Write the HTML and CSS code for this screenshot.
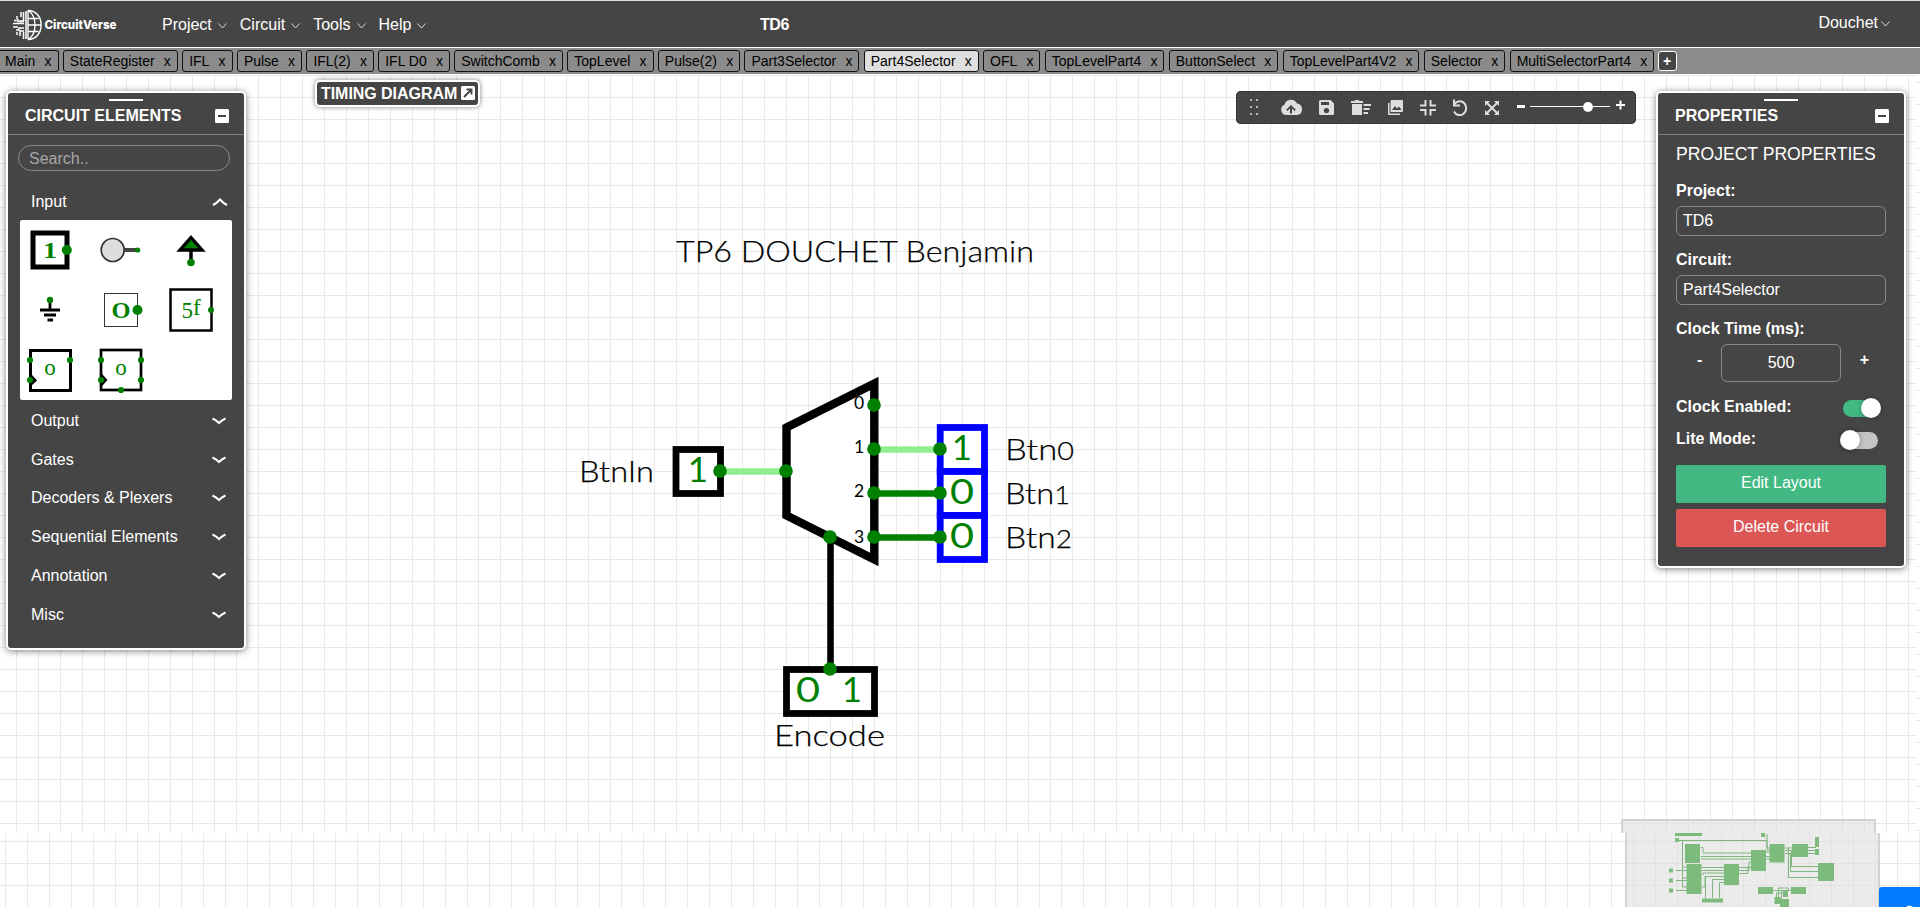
FILE: index.html
```html
<!DOCTYPE html>
<html lang="en">
<head>
<meta charset="utf-8">
<title>CircuitVerse - TD6</title>
<link rel="stylesheet" href="styles.css">
</head>
<body>
<header class="navbar">
  <svg class="logo" width="110" height="34" viewBox="10 6 110 34">
    <g fill="none" stroke="#fff" stroke-width="1.4">
      <path d="M28 9.500V38.500M28 9.500C45.500 9.500 45.500 38.500 28 38.500M29 10C37 16 37 32 29 38M28 17.500H38.500M28 24H41M28 30.500H38.500"/>
      <path d="M26 10V38M23.500 11V20H19.500M21 11V16M24 22.500H13M24 20.500H18V18M24 27H19V29H16M24 30H20V35M23.500 31V38M14 19.500H17M13 26H18M17 15V18M17 31V34" stroke-width="1.500"/>
    </g>
    <text x="44.500" y="28.200" class="logo-text" textLength="72" lengthAdjust="spacingAndGlyphs">CircuitVerse</text>
  </svg>
  <nav class="menu">
    <span class="menu-item">Project<svg class="caret" width="9" height="6" viewBox="0 0 9 6"><path d="M.5.5L4.500 5L8.500.5"/></svg></span>
    <span class="menu-item">Circuit<svg class="caret" width="9" height="6" viewBox="0 0 9 6"><path d="M.5.5L4.500 5L8.500.5"/></svg></span>
    <span class="menu-item">Tools<svg class="caret" width="9" height="6" viewBox="0 0 9 6"><path d="M.5.5L4.500 5L8.500.5"/></svg></span>
    <span class="menu-item">Help<svg class="caret" width="9" height="6" viewBox="0 0 9 6"><path d="M.5.5L4.500 5L8.500.5"/></svg></span>
  </nav>
  <span class="project-name">TD6</span>
  <span class="menu-item user">Douchet<svg class="caret" width="9" height="6" viewBox="0 0 9 6"><path d="M.5.5L4.500 5L8.500.5"/></svg></span>
</header>
<div class="tabs">
  <div class="tab first">Main<span>x</span></div>
  <div class="tab">StateRegister<span>x</span></div>
  <div class="tab">IFL<span>x</span></div>
  <div class="tab">Pulse<span>x</span></div>
  <div class="tab">IFL(2)<span>x</span></div>
  <div class="tab">IFL D0<span>x</span></div>
  <div class="tab">SwitchComb<span>x</span></div>
  <div class="tab">TopLevel<span>x</span></div>
  <div class="tab">Pulse(2)<span>x</span></div>
  <div class="tab">Part3Selector<span>x</span></div>
  <div class="tab active">Part4Selector<span>x</span></div>
  <div class="tab">OFL<span>x</span></div>
  <div class="tab">TopLevelPart4<span>x</span></div>
  <div class="tab">ButtonSelect<span>x</span></div>
  <div class="tab">TopLevelPart4V2<span>x</span></div>
  <div class="tab">Selector<span>x</span></div>
  <div class="tab">MultiSelectorPart4<span>x</span></div>
  <div class="tab-add">+</div>
</div>
<main class="workspace">
  <svg class="canvas" width="1920" height="832" viewBox="0 75 1920 832">
    <defs>
      <pattern id="grid" x="16" y="9" width="22" height="22" patternUnits="userSpaceOnUse"><path d="M0 .5H22M.5 0V22"/></pattern>
      <pattern id="grid-low" x="5" y="5" width="22" height="22" patternUnits="userSpaceOnUse"><path d="M0 .5H22M.5 0V22"/></pattern>
      <pattern id="grid-side" x="18" y="16" width="22" height="22" patternUnits="userSpaceOnUse"><path d="M0 .5H22M.5 0V22"/></pattern>
    </defs>
    <rect x="0" y="75" width="1916" height="758" fill="url(#grid)"/>
    <rect x="1916" y="75" width="4" height="758" fill="url(#grid-side)"/>
    <rect x="0" y="833" width="1920" height="74" fill="url(#grid-low)"/>

    <g class="label">
      <text x="676" y="262" textLength="358" lengthAdjust="spacingAndGlyphs">TP6 DOUCHET Benjamin</text>
      <text x="579" y="482" textLength="75" lengthAdjust="spacingAndGlyphs">BtnIn</text>
      <text x="1005" y="460" textLength="69" lengthAdjust="spacingAndGlyphs">Btn<tspan class="old">0</tspan></text>
      <text x="1005" y="504" textLength="65" lengthAdjust="spacingAndGlyphs">Btn<tspan class="old">1</tspan></text>
      <text x="1005" y="548" textLength="67" lengthAdjust="spacingAndGlyphs">Btn<tspan class="old">2</tspan></text>
      <text x="774" y="746" textLength="111" lengthAdjust="spacingAndGlyphs">Encode</text>
    </g>

    <g class="part">
      <rect x="676" y="449.500" width="44.500" height="44"/>
      <path class="mux" d="M786.500 427.500L874.300 383.500V559.500L786.500 515.500Z"/>
    </g>
    <g class="part out">
      <rect x="940.200" y="427.500" width="44.300" height="44"/>
      <rect x="940.200" y="471.500" width="44.300" height="44"/>
      <rect x="940.200" y="515.500" width="44.300" height="44"/>
    </g>
    <g class="pin-no">
      <text x="859" y="409">0</text>
      <text x="859" y="453">1</text>
      <text x="859" y="497">2</text>
      <text x="859" y="543">3</text>
    </g>
    <g class="wire">
      <path class="high" d="M720 471.500H786M874 449.500H940"/>
      <path class="low" d="M874 493.500H940M874 537.500H940"/>
      <path class="bus" d="M830.500 537V669"/>
    </g>
    <g class="part"><rect x="786.500" y="669.500" width="88" height="44"/></g>
    <g class="value">
      <text x="698" y="482">1</text>
      <text x="962" y="460">1</text>
      <text x="950" y="504" textLength="24" lengthAdjust="spacingAndGlyphs" class="zero">0</text>
      <text x="950" y="548" textLength="24" lengthAdjust="spacingAndGlyphs" class="zero">0</text>
      <text x="796" y="702" textLength="24" lengthAdjust="spacingAndGlyphs" class="zero">0</text>
      <text x="852" y="702">1</text>
    </g>
    <g class="dot">
      <circle cx="720" cy="471" r="6.800"/><circle cx="786" cy="471" r="6.800"/>
      <circle cx="874" cy="405" r="6.800"/><circle cx="874" cy="449" r="6.800"/><circle cx="874" cy="493" r="6.800"/><circle cx="874" cy="537" r="6.800"/>
      <circle cx="940" cy="449" r="6.800"/><circle cx="940" cy="493" r="6.800"/><circle cx="940" cy="537" r="6.800"/>
      <circle cx="830" cy="537" r="6.800"/><circle cx="830" cy="669" r="6.800"/>
    </g>

    <g class="minimap">
      <path d="M1622 819H1876V833H1880V907H1625V833H1622Z" fill="#dedede" fill-opacity=".6"/>
      <path d="M1622 820H1876M1622 819V833M1626 833V907M1875 820V833M1879 833V907" stroke="#c8c8c8" stroke-opacity=".7" stroke-width="2" fill="none"/>
      <path d="M1679 840.500H1767V848H1783M1682.500 841V887H1688M1682 867H1687M1682 878H1687M1701 847.500H1703V853H1751M1701 856.500H1751M1701 859H1751M1702 867.500H1724M1702 870.500H1724M1703 875V873H1724M1702 887H1705V876.500H1724M1705.500 877V898M1712.500 898V879.500H1724M1719.500 898V882.500H1724M1739 867.500H1751M1739 870.500H1749V862H1751M1739 873.500H1748V866M1676 870.500H1687M1676 880.500H1687M1676 890.500H1687M1766 852H1770M1766 856.500H1770M1766 859H1770M1767 834V850H1770M1785 848H1792M1785 850.500H1792M1785 853.500H1792M1807 847.500H1816M1807 850.500H1816M1807 853.500H1816M1788.500 848V877.500H1818M1790.500 853V871.500H1818M1791.500 850V866.500H1818M1773 890.500H1791M1778.500 900V888H1788.500V891M1781.500 900V891M1776.500 898V893H1784" fill="none" stroke="#80b580"/>
      <path d="M1675 833h27v3h-27zM1675 838h4v4h-4zM1685 844h15v19h-15zM1686.500 864h15v30h-15zM1669 868.500h4v4h-4zM1669 878.500h4v4h-4zM1669 888.500h4v4h-4zM1724 864h15v21h-15zM1751 850h15v21h-15zM1761 833h4v4h-4zM1769.500 844h15v18.500h-15zM1792 844h16v13h-16zM1815 837h4v10h-4zM1815 849h4v6h-4zM1818 863h16v18h-16zM1702 898.500h21v4h-21zM1758 887h15v7h-15zM1791 887h15v7h-15zM1783 891h5v6h-5zM1774.500 897h6v7h-6zM1780 899h9v8h-9z" fill="#7cbb7c"/>
    </g>
    <path d="M1879 907V890Q1879 887 1882 887H1920V907Z" fill="#007bff"/>
    <path d="M1906 907Q1909.500 904 1913 907Z" fill="#fff"/>
  </svg>

  <div class="timing">TIMING DIAGRAM<svg width="14" height="14" viewBox="0 0 14 14"><rect width="14" height="14" rx="1.500" fill="#fff"/><path d="M3 11L10 4M5.500 3.500H10.500V8.500" stroke="#454545" stroke-width="1.900" fill="none"/></svg></div>

  <svg class="toolbar" width="400" height="33" viewBox="1236 91 400 33">
    <g fill="#b8b8b8"><path d="M1250 99h2v2h-2zM1256 99h2v2h-2zM1250 106h2v2h-2zM1256 106h2v2h-2zM1250 113h2v2h-2zM1256 113h2v2h-2z"/></g>
    <g fill="#dedede">
      <path d="M1286.500 115A5.300 5.300 0 0 1 1284.500 104.800A6.700 6.700 0 0 1 1297 103.600A5.800 5.800 0 0 1 1297.500 115Z"/>
      <path d="M1291 105L1295.800 109.800L1294.600 111L1292 108.600V113.500H1290V108.600L1287.400 111L1286.200 109.800Z" fill="#454545"/>
      <path d="M1320.500 100H1330.500L1334 103.500V113.500Q1334 115 1332.500 115H1320.500Q1319 115 1319 113.500V101.500Q1319 100 1320.500 100Z"/>
      <path d="M1321 102h8v3h-8z" fill="#454545"/><circle cx="1326.500" cy="110.500" r="2.600" fill="#454545"/>
      <path d="M1351 101h3.500l1-1h3l1 1h3.500v2h-12zM1352 104h10v11h-10zM1363.500 104h7.500v2h-7.500zM1363.500 108h6v2h-6zM1363.500 112h4.500v2h-4.500z"/>
      <path d="M1391.500 100H1402Q1403 100 1403 101V111Q1403 112 1402 112H1391.500Q1390.500 112 1390.500 111V101Q1390.500 100 1391.500 100ZM1388 103h1.500v10.500h10.500v1.500h-11q-1 0-1-1z"/>
      <path d="M1392 110L1395 106L1397 108.500L1399 106.500L1401.500 110Z" fill="#454545"/>
    </g>
    <g fill="none" stroke="#dedede" stroke-width="2">
      <path d="M1420 105.500H1425.500V100M1430.500 100V105.500H1436M1420 110H1425.500V115.500M1430.500 115.500V110H1436"/>
      <path d="M1454.500 104A6.500 6.900 0 1 1 1454 111.500"/>
      <path d="M1454 99.500V105.500H1460"/>
      <path d="M1487 103L1497 113M1497 103L1487 113"/>
    </g>
    <g fill="#dedede"><path d="M1485 101h5l-5 5zM1499 101v5l-5-5zM1485 115v-5l5 5zM1499 115h-5l5-5z"/></g>
    <g fill="#fff"><path d="M1517 105h8v3h-8zM1530 106h80v1h-80z"/><circle cx="1588" cy="107" r="5"/><path d="M1616 104h9v2h-9zM1619.500 100.500h2v9h-2z"/></g>
  </svg>

  <section class="panel elements">
    <div class="panel-head"><i></i><b>CIRCUIT ELEMENTS</b><em></em></div>
    <input class="search" placeholder="Search..">
    <div class="cat open">Input<svg width="16" height="8" viewBox="0 0 16 8"><path d="M1 7Q5 5 8 1.500Q11 5 15 7"/></svg></div>
    <svg class="icons" width="212" height="180" viewBox="0 0 212 180">
      <g fill="#fff" stroke="#000">
        <rect x="13" y="13" width="34" height="34" stroke-width="5"/>
        <path d="M98 30H117" stroke="#444" stroke-width="4"/><circle cx="92.700" cy="30" r="11.500" fill="#ddd" stroke="#333" stroke-width="1.700"/>
        <path d="M171 28V42" stroke-width="3.500"/><path d="M171 17.500L182 30H160Z" fill="green" stroke-width="3.400"/>
        <path d="M30 80V90M20 90H40M24 95H36M27.500 100H33" stroke-width="2.800" fill="none"/>
        <rect x="84.500" y="73.500" width="33" height="33" stroke="#333" stroke-width="1"/>
        <rect x="150.500" y="69.500" width="41" height="41" stroke-width="2.500"/>
        <rect x="10.500" y="130.500" width="40" height="40" stroke-width="3"/><path d="M11 155L16 160.500L11 165Z" fill="#000" stroke-width="1.500"/>
        <rect x="81" y="130" width="40" height="40" stroke-width="2.700"/><path d="M82 155L86.500 160L82 165Z" fill="#000" stroke-width="1.500"/>
      </g>
      <g fill="green">
        <circle cx="46.800" cy="30" r="5"/><circle cx="117.700" cy="30" r="2.600"/><circle cx="171" cy="42.500" r="3.800"/>
        <circle cx="30" cy="80" r="3.200"/><circle cx="117.500" cy="90" r="5"/><circle cx="191" cy="90" r="3"/>
        <circle cx="10" cy="140" r="3.100"/><circle cx="50" cy="140" r="3.100"/><circle cx="10" cy="160" r="3.100"/>
        <circle cx="81" cy="140" r="3.100"/><circle cx="121" cy="140" r="3.100"/><circle cx="81" cy="160" r="3.100"/><circle cx="121" cy="160" r="3.100"/><circle cx="101" cy="170" r="3.100"/>
        <g class="glyphs">
          <text x="30" y="38" font-weight="bold" textLength="14" lengthAdjust="spacingAndGlyphs">1</text>
          <text x="101" y="98" font-weight="bold" textLength="19" lengthAdjust="spacingAndGlyphs">O</text>
          <text x="171" y="95"><tspan dy="3">5</tspan><tspan dy="-3">f</tspan></text>
          <text x="30" y="155">o</text>
          <text x="101" y="155">o</text>
        </g>
      </g>
    </svg>
    <div class="cats">
      <div class="cat">Output<svg width="14" height="8" viewBox="0 0 14 8"><path d="M.5 1.500Q4 3 7 6Q10 3 13.500 1.500"/></svg></div>
      <div class="cat">Gates<svg width="14" height="8" viewBox="0 0 14 8"><path d="M.5 1.500Q4 3 7 6Q10 3 13.500 1.500"/></svg></div>
      <div class="cat">Decoders &amp; Plexers<svg width="14" height="8" viewBox="0 0 14 8"><path d="M.5 1.500Q4 3 7 6Q10 3 13.500 1.500"/></svg></div>
      <div class="cat">Sequential Elements<svg width="14" height="8" viewBox="0 0 14 8"><path d="M.5 1.500Q4 3 7 6Q10 3 13.500 1.500"/></svg></div>
      <div class="cat">Annotation<svg width="14" height="8" viewBox="0 0 14 8"><path d="M.5 1.500Q4 3 7 6Q10 3 13.500 1.500"/></svg></div>
      <div class="cat">Misc<svg width="14" height="8" viewBox="0 0 14 8"><path d="M.5 1.500Q4 3 7 6Q10 3 13.500 1.500"/></svg></div>
    </div>
  </section>

  <section class="panel props">
    <div class="panel-head"><i></i><b>PROPERTIES</b><em></em></div>
    <div class="props-body">
      <div class="props-title">PROJECT PROPERTIES</div>
      <label>Project:</label>
      <input value="TD6">
      <label>Circuit:</label>
      <input value="Part4Selector">
      <label>Clock Time (ms):</label>
      <div class="clock"><b>-</b><input value="500"><b>+</b></div>
      <div class="switch-row"><span>Clock Enabled:</span><div class="switch on"></div></div>
      <div class="switch-row"><span>Lite Mode:</span><div class="switch"></div></div>
      <button class="edit">Edit Layout</button>
      <button class="delete">Delete Circuit</button>
    </div>
  </section>
</main>
</body>
</html>
```
FILE: styles.css
```css
* { box-sizing: border-box; }
body { margin: 0; width: 1920px; height: 907px; overflow: hidden; background: #fff; font: 16px "Liberation Sans", Arial, sans-serif; display: flex; flex-direction: column; }
input, button { font: inherit; }

.navbar { position: relative; height: 48px; flex: none; background: #454545; border-top: 1px solid #dde2df; border-bottom: 1px solid #fff; color: #fff; display: flex; align-items: center; padding: 0 30px 0 10px; }
.logo { flex: none; }
.logo-text { font: 800 12px Inter, sans-serif; fill: #fff; }
.menu { display: flex; gap: 13px; margin: 1px 0 0 42px; }
.menu-item { display: flex; align-items: center; gap: 6px; }
.caret { fill: none; stroke: #ddd; stroke-width: 1; margin-top: 2px; }
.project-name { position: absolute; left: 760px; top: 15px; font-weight: bold; letter-spacing: -.4px; }
.user { margin-left: auto; gap: 3px; padding-bottom: 3px; }

.tabs { height: 27px; flex: none; background: #8b8b8b; border-bottom: 1px solid #fff; display: flex; align-items: center; gap: 4.3px; padding-bottom: 1px; }
.tab { height: 22px; border: 1px solid #111; border-radius: 3px; font-size: 14px; display: flex; align-items: center; gap: 9.2px; padding: 0 6px; color: #000; white-space: nowrap; }
.tab.first { border-left: 0; border-radius: 0 3px 3px 0; padding-left: 5px; }
.tab.active { background: #dfdfdf; }
.tab-add { margin-left: -1px; width: 19px; height: 20px; background: #454545; color: #fff; border: 1px solid #fff; border-radius: 3px; font-size: 14px; font-weight: bold; display: flex; align-items: center; justify-content: center; }

.workspace { position: relative; flex: 1; }
.canvas { display: block; }
.canvas pattern path { stroke: #e9e9e9; fill: none; }
.label { font: 300 30px Lato, sans-serif; fill: #000; stroke: #000; stroke-width: .25px; }
.old { font-size: 25px; }
.part { fill: #fff; stroke: #000; stroke-width: 6.8px; }
.part .mux { stroke-width: 8.4px; }
.part.out { stroke: #00f; }
.pin-no { font: 17.5px Lato, sans-serif; text-anchor: middle; }
.wire { fill: none; stroke-width: 6.6px; }
.wire .high { stroke: #90ee90; }
.wire .low { stroke: green; }
.wire .bus { stroke: #000; }
.value { font: 35px Lato, sans-serif; fill: green; text-anchor: middle; }
.value .zero { text-anchor: start; }
.dot { fill: green; }

.timing { position: absolute; left: 315px; top: 5px; width: 165px; height: 27px; border: 2px solid #fff; border-radius: 5px; background: #454545; color: #fff; font-weight: bold; letter-spacing: -.05px; box-shadow: 0 0 5px rgba(0,0,0,.5); display: flex; align-items: center; justify-content: space-between; padding: 0 3px 0 4px; white-space: nowrap; }
.timing svg { margin-top: -2px; }
.toolbar { position: absolute; left: 1236px; top: 16px; background: #454545; border-radius: 5px; box-shadow: inset 0 0 0 1px #353535; }

.panel { position: absolute; top: 16px; background: #454545; color: #fff; border: 2px solid #fff; border-radius: 5px; box-shadow: 0 1px 7px rgba(0,0,0,.5); }
.elements { left: 6px; width: 240px; height: 559px; }
.props { left: 1656px; width: 250px; height: 477px; }
.panel-head { position: relative; height: 42px; border-bottom: 1px solid #808080; display: flex; justify-content: space-between; align-items: center; padding: 4px 15px 0 17px; }
.panel-head i { position: absolute; left: 50%; top: 6px; width: 34px; height: 2px; margin-left: -17px; background: #fff; }
.panel-head em { width: 14px; height: 14px; border-radius: 1.5px; background: linear-gradient(#454545, #454545) center / 8px 2px no-repeat #fff; }
.panel-head b { margin-top: 1px; }

.search { display: block; width: 212px; height: 26px; margin: 10px 0 0 10px; padding: 1px 10px 0; background: none; border: 1px solid #888; border-radius: 13px; color: #fff; }
.search::placeholder { color: #a8a8a8; opacity: 1; }
.cat { display: flex; align-items: center; justify-content: space-between; height: 38.75px; padding: 0 18px 0 23px; }
.cat svg { fill: none; stroke: #fff; stroke-width: 2; }
.cat.open { height: 39px; margin-top: 10px; padding: 2px 16px 0 23px; }
.cats { padding-top: 1.5px; }
.icons { display: block; margin-left: 12px; background: #fff; border-radius: 2px; }
.glyphs { font: 23px "Liberation Serif", serif; text-anchor: middle; }

.props-body { padding: 8px 18px; display: flex; flex-direction: column; }
.props-title { font-size: 17.6px; line-height: 22px; white-space: nowrap; }
.props label { font-weight: bold; line-height: 18px; margin: 17px 0 6px; }
.props label ~ label { margin-top: 15px; }
.props input { width: 210px; height: 30px; padding: 0 6px; background: none; color: #fff; border: 1px solid #888; border-radius: 6px; }
.clock { display: flex; align-items: center; justify-content: space-between; padding: 0 17px 0 21px; margin: 0 0 10px; }
.props .clock input { width: 120px; height: 38px; text-align: center; }
.clock b { padding-bottom: 6px; }
.switch-row { display: flex; justify-content: space-between; align-items: center; height: 32px; padding: 0 8px 0 0; font-weight: bold; }
.switch-row span { padding-bottom: 3px; }
.switch { position: relative; width: 35px; height: 17px; border-radius: 9px; background: #c4c4c4; }
.switch::after { content: ""; position: absolute; left: -3px; top: -2px; width: 20px; height: 20px; border-radius: 50%; background: #fff; box-shadow: 0 0 5px rgba(0,0,0,.35); }
.switch.on { background: #42b983; margin-right: 0; }
.switch.on::after { left: 18px; }
.props button { height: 38px; border: 0; border-radius: 2px; color: #fff; padding: 0 0 2px; }
.edit { background: #42b983; margin-top: 9px; }
.delete { background: #dc5656; margin-top: 6px; }
```
